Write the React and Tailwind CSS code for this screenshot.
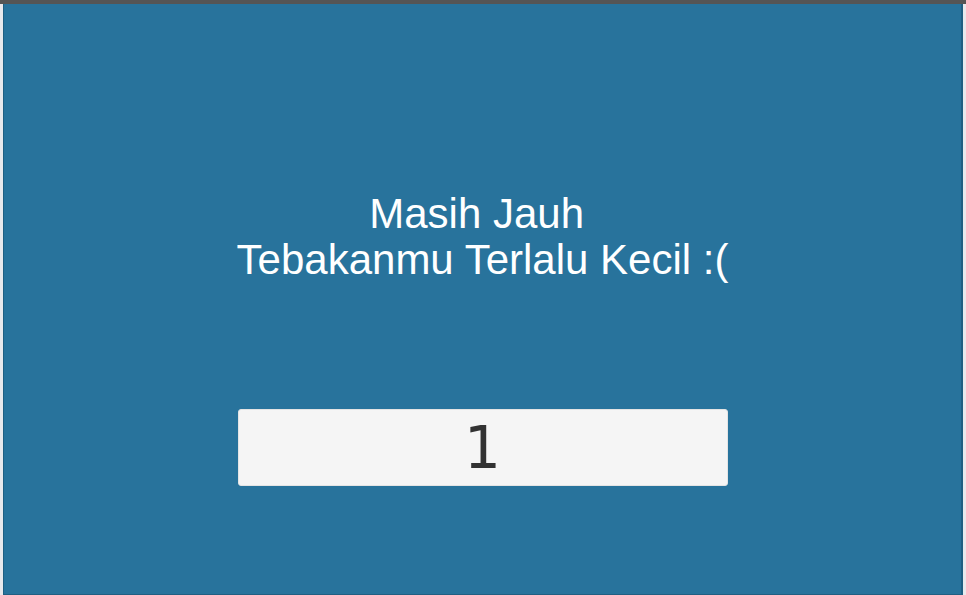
import React from 'react';

const App = () => {
    return (
        <div className="w-[966px] h-[595px] flex flex-col bg-[#4d4d4d] overflow-hidden">
            <div className="h-[4px] bg-[#555555]" />
            <div className="flex flex-1">
                <div className="w-[3px] bg-[#e9e9ec]" />
                <div className="w-[1px] bg-[#1f5f82]" />
                <div className="flex-1 flex flex-col items-center bg-[#28739c] pt-[187px] border-b border-[#215f82]">
                    <div className="text-white text-center text-[42px] leading-[46px] whitespace-pre font-['Liberation_Sans',Arial,sans-serif]">
                        <div>{'Masih Jauh '}</div>
                        <div>Tebakanmu Terlalu Kecil :(</div>
                    </div>
                    <div className="mt-[126px] w-[490px] h-[77px] flex items-center justify-center bg-[#f5f5f5] rounded-[3px] border border-[#e4e4e4]">
                        <span className="text-[58px] leading-none text-[#323232] font-['DejaVu_Sans',sans-serif]">1</span>
                    </div>
                </div>
                <div className="w-[2px] bg-[#1f5f82]" />
                <div className="w-[3px] bg-[#e9e9ec]" />
            </div>
        </div>
    );
};

export default App;
